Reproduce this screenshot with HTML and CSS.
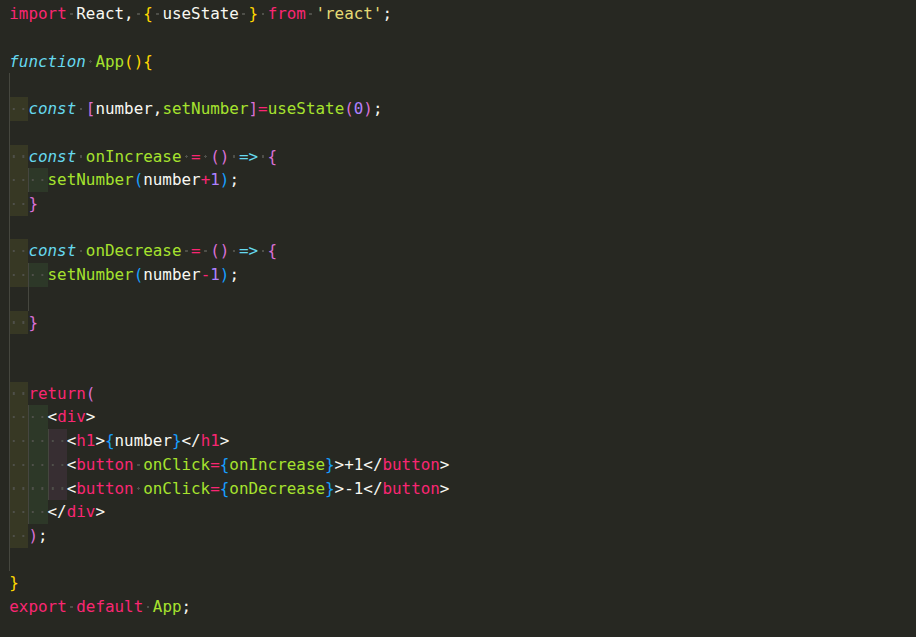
FILE: index.html
```html
<!DOCTYPE html>
<html lang="en">
<head>
<meta charset="utf-8">
<title>App.js</title>
<link rel="stylesheet" href="styles.css">
</head>
<body>
<div class="editor">
<div class="ln"><span class="k">import</span><span class="s"> </span>React,<span class="s"> </span><span class="b1">{</span><span class="s"> </span>useState<span class="s"> </span><span class="b1">}</span><span class="s"> </span><span class="k">from</span><span class="s"> </span><span class="str">'react'</span>;</div>
<div class="ln"></div>
<div class="ln"><span class="c">function</span><span class="s"> </span><span class="f">App</span><span class="b1">(){</span></div>
<div class="ln"><span class="gd"></span></div>
<div class="ln"><span class="in y">  </span><span class="c">const</span><span class="s"> </span><span class="b2">[</span>number,<span class="f">setNumber</span><span class="b2">]</span><span class="k">=</span><span class="f">useState</span><span class="b2">(</span><span class="n">0</span><span class="b2">)</span>;</div>
<div class="ln"><span class="gd"></span></div>
<div class="ln"><span class="in y">  </span><span class="c">const</span><span class="s"> </span><span class="f">onIncrease</span><span class="s"> </span><span class="k">=</span><span class="s"> </span><span class="b2">()</span><span class="s"> </span><span class="a">=&gt;</span><span class="s"> </span><span class="b2">{</span></div>
<div class="ln"><span class="in y">  </span><span class="in g">  </span><span class="f">setNumber</span><span class="b3">(</span>number<span class="k">+</span><span class="n">1</span><span class="b3">)</span>;</div>
<div class="ln"><span class="in y">  </span><span class="b2">}</span></div>
<div class="ln"><span class="gd"></span></div>
<div class="ln"><span class="in y">  </span><span class="c">const</span><span class="s"> </span><span class="f">onDecrease</span><span class="s"> </span><span class="k">=</span><span class="s"> </span><span class="b2">()</span><span class="s"> </span><span class="a">=&gt;</span><span class="s"> </span><span class="b2">{</span></div>
<div class="ln"><span class="in y">  </span><span class="in g">  </span><span class="f">setNumber</span><span class="b3">(</span>number<span class="k">-</span><span class="n">1</span><span class="b3">)</span>;</div>
<div class="ln"><span class="gd"></span><span class="gd"></span></div>
<div class="ln"><span class="in y">  </span><span class="b2">}</span></div>
<div class="ln"><span class="gd"></span></div>
<div class="ln"><span class="gd"></span></div>
<div class="ln"><span class="in y">  </span><span class="k">return</span><span class="b2">(</span></div>
<div class="ln"><span class="in y">  </span><span class="in g">  </span>&lt;<span class="k">div</span>&gt;</div>
<div class="ln"><span class="in y">  </span><span class="in g">  </span><span class="in p">  </span>&lt;<span class="k">h1</span>&gt;<span class="b3">{</span>number<span class="b3">}</span>&lt;/<span class="k">h1</span>&gt;</div>
<div class="ln"><span class="in y">  </span><span class="in g">  </span><span class="in p">  </span>&lt;<span class="k">button</span><span class="s"> </span><span class="f">onClick</span><span class="k">=</span><span class="b3">{</span><span class="f">onIncrease</span><span class="b3">}</span>&gt;+1&lt;/<span class="k">button</span>&gt;</div>
<div class="ln"><span class="in y">  </span><span class="in g">  </span><span class="in p">  </span>&lt;<span class="k">button</span><span class="s"> </span><span class="f">onClick</span><span class="k">=</span><span class="b3">{</span><span class="f">onDecrease</span><span class="b3">}</span>&gt;-1&lt;/<span class="k">button</span>&gt;</div>
<div class="ln"><span class="in y">  </span><span class="in g">  </span>&lt;/<span class="k">div</span>&gt;</div>
<div class="ln"><span class="in y">  </span><span class="b2">)</span>;</div>
<div class="ln"><span class="gd"></span></div>
<div class="ln"><span class="b1">}</span></div>
<div class="ln"><span class="k">export</span><span class="s"> </span><span class="k">default</span><span class="s"> </span><span class="f">App</span>;</div>
</div>
</body>
</html>
```
FILE: styles.css
```css
html, body {
  margin: 0;
  padding: 0;
  background: #272822;
  width: 916px;
  height: 637px;
  overflow: hidden;
}

.editor {
  padding: 2.2px 0 0 9.3px;
  font-family: "DejaVu Sans Mono", "Liberation Mono", monospace;
  font-size: 15.9px;
  line-height: 23.72px;
  color: #f8f8f2;
}

.ln {
  height: 23.72px;
  white-space: pre;
}

.k { color: #f92672; }
.f { color: #a6e22e; }
.c { color: #66d9ef; font-style: italic; }
.a { color: #66d9ef; }
.str { color: #e6db74; }
.n { color: #ae81ff; }
.b1 { color: #ffd700; }
.b2 { color: #da70d6; }
.b3 { color: #179fff; }

.s {
  display: inline-block;
  width: 1ch;
  height: 23.72px;
  vertical-align: top;
  background: radial-gradient(circle at 50% 50%, #4f504a 0 1.1px, transparent 1.4px);
}

.in {
  display: inline-block;
  width: 2ch;
  height: 23.72px;
  vertical-align: top;
  background-image: radial-gradient(circle at 50% 50%, #4f504a 0 1.1px, transparent 1.4px);
  background-size: 1ch 100%;
  background-repeat: repeat-x;
  box-shadow: inset 1px 0 0 #45463f;
}

.in.y { background-color: rgba(255, 255, 64, 0.075); }
.in.g { background-color: rgba(127, 255, 127, 0.075); }
.in.p { background-color: rgba(255, 127, 255, 0.075); }

.gd {
  display: inline-block;
  width: 2ch;
  height: 23.72px;
  vertical-align: top;
  box-shadow: inset 1px 0 0 #46473f;
}
```
